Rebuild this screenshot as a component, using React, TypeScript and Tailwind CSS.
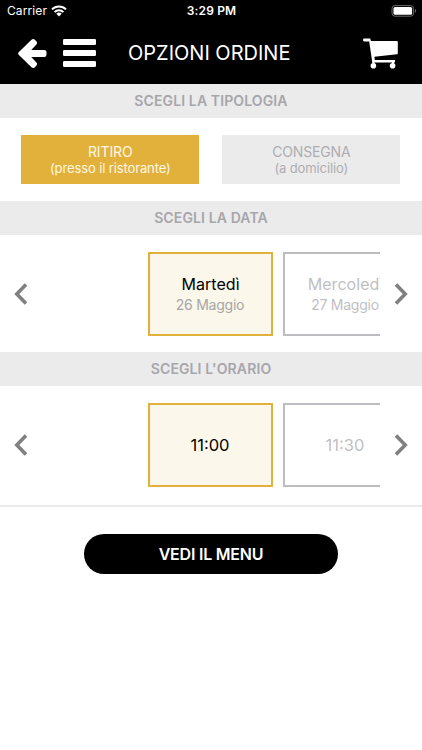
import React, { useState } from "react";

interface Slot {
  title: string;
  subtitle?: string;
}

const dates: Slot[] = [
  { title: "Martedì", subtitle: "26 Maggio" },
  { title: "Mercoledì", subtitle: "27 Maggio" },
];

const times: Slot[] = [{ title: "11:00" }, { title: "11:30" }];

function StatusBar() {
  return (
    <div className="flex h-[22px] items-center text-white">
      <div className="flex flex-1 items-center gap-[4px] pl-[7px]">
        <span className="text-[12px] leading-[22px] tracking-[0.1px]">Carrier</span>
        <svg width="16" height="12" viewBox="0 0 16 12" fill="none" stroke="currentColor" strokeWidth="2">
          <path d="M1 4.4C4.8.5 11.2.5 15 4.4M3.6 7.1c2.4-2.5 6.4-2.5 8.8 0" />
          <path d="M5.3 8.7c1.5-1.5 3.9-1.5 5.4 0L8 11.6z" fill="currentColor" stroke="none" />
        </svg>
      </div>
      <span className="pr-px text-[12px] leading-[22px] font-semibold tracking-[0.15px]">3:29 PM</span>
      <div className="flex flex-1 justify-end pr-[5px]">
        <svg width="26" height="12" viewBox="0 0 26 12">
          <rect x="1" y=".6" width="21.6" height="10.6" rx="3" fill="none" stroke="#6b6b6b" />
          <rect x="2.5" y="2" width="18.6" height="7.8" rx="1.6" fill="#fff" />
          <path d="M24 4c1.6.5 1.6 3.3 0 3.8z" fill="#6b6b6b" />
        </svg>
      </div>
    </div>
  );
}

function NavBar() {
  return (
    <div className="flex h-[62px] items-center pr-[23px] pl-[18px] text-white">
      <svg width="29" height="31" viewBox="0 0.5 29 31" fill="currentColor">
        <path d="M.9 14.4L13.5 2.2Q15 .9 16.6 2.1L18.3 3.8Q19.7 5.3 18.4 7L13.3 12.5H26.2Q28.5 12.5 28.5 14.6V17.2Q28.5 19.4 26.2 19.4H13.3L18.4 25Q19.7 26.7 18.3 28.2L16.6 29.9Q15 31.1 13.5 29.7L.9 17.6Q-.6 16 .9 14.4z" />
      </svg>
      <svg className="ml-4" width="33" height="28" viewBox="0 0 33 28" fill="currentColor">
        <rect y="0" width="33" height="6" rx="1.2" />
        <rect y="11" width="33" height="6" rx="1.2" />
        <rect y="22" width="33" height="6" rx="1.2" />
      </svg>
      <h1 className="flex-1 pl-[32px] text-[20px] leading-[28px] font-normal whitespace-nowrap">
        OPZIONI ORDINE
      </h1>
      <svg width="36" height="32" viewBox="0 0 36 32" fill="currentColor">
        <path d="M1.2 1.6H7.2L8 4H34q.8 0 .8.8V16.3q0 .8-.8.9L11.4 19.8l.4 3.2H32v2.6H9.3L6.2 4.4H1.2Q0 4.4 0 3T1.2 1.6z" />
        <path d="M9.4 23h2v6h-2zM29 25h2v4h-2z" />
        <circle cx="10.4" cy="28.8" r="2.8" />
        <circle cx="29.6" cy="28.8" r="2.8" />
      </svg>
    </div>
  );
}

function SectionTitle({ children }: { children: React.ReactNode }) {
  return (
    <h2 className="h-[34px] bg-[#ebebeb] text-center text-[14px] leading-[34px] font-semibold tracking-[0.12px] text-[#a6a6ab]">
      {children}
    </h2>
  );
}

function Chevron({ className = "" }: { className?: string }) {
  return (
    <svg className={className} width="14" height="22" viewBox="0 0 14 22" fill="none" stroke="#808080" strokeWidth="3.6">
      <path d="M12 1.6L2.8 11l9.2 9.4" />
    </svg>
  );
}

function Carousel({ slots }: { slots: Slot[] }) {
  const [selected, setSelected] = useState(0);

  return (
    <div className="flex items-center justify-between px-[14px]">
      <button onClick={() => setSelected(Math.max(0, selected - 1))}>
        <Chevron />
      </button>
      <div className="flex w-[337px] gap-[10px] overflow-hidden pl-[105px]">
        {slots.map((slot, i) => (
          <button
            key={slot.title}
            onClick={() => setSelected(i)}
            className={`flex h-[84px] w-[125px] shrink-0 flex-col items-center justify-center border-2 ${
              i === selected
                ? "border-[#e2b13c] bg-[#fbf7ea] text-black"
                : "border-[#bcbdc1] bg-white text-[#bfbfc3]"
            }`}
          >
            {slot.subtitle ? (
              <>
                <span className="pl-px text-[16px] leading-[20px] tracking-[0.05px]">{slot.title}</span>
                <span
                  className={`pt-px text-[14px] leading-[20px] tracking-[-0.25px] ${
                    i === selected ? "text-[#a6a6a6]" : ""
                  }`}
                >
                  {slot.subtitle}
                </span>
              </>
            ) : (
              <span className="text-[16.5px] leading-[20px]">{slot.title}</span>
            )}
          </button>
        ))}
      </div>
      <button onClick={() => setSelected(Math.min(slots.length - 1, selected + 1))}>
        <Chevron className="rotate-180" />
      </button>
    </div>
  );
}

export default function App() {
  return (
    <div className="min-h-[750px] w-[422px] bg-white font-['Inter','Liberation_Sans',sans-serif]">
      <header className="h-[84px] bg-black">
        <StatusBar />
        <NavBar />
      </header>

      {/* Order type */}
      <SectionTitle>SCEGLI LA TIPOLOGIA</SectionTitle>
      <div className="flex h-[83px] gap-[23px] px-[21.3px] pt-[17px]">
        <button className="flex h-[49px] w-[178px] flex-col items-center justify-center bg-[#e2b13c] text-[#fff8e4]">
          <span className="text-[14px] leading-[17px] tracking-[-0.1px]">RITIRO</span>
          <span className="text-[13px] leading-[16px] tracking-[-0.12px]">(presso il ristorante)</span>
        </button>
        <button className="flex h-[49px] w-[178px] flex-col items-center justify-center bg-[#ebebeb] text-[#adadb2]">
          <span className="text-[14px] leading-[17px] tracking-[-0.15px]">CONSEGNA</span>
          <span className="text-[13px] leading-[16px] tracking-[-0.12px]">(a domicilio)</span>
        </button>
      </div>

      {/* Date */}
      <SectionTitle>SCEGLI LA DATA</SectionTitle>
      <div className="h-[117px] pt-[17px]">
        <Carousel slots={dates} />
      </div>

      {/* Time */}
      <SectionTitle>SCEGLI L'ORARIO</SectionTitle>
      <div className="h-[121px] border-b-2 border-[#ebebeb] pt-[17px]">
        <Carousel slots={times} />
      </div>

      <button className="mx-auto mt-[27px] block h-[40px] w-[254px] rounded-full bg-black text-[16px] leading-[40px] font-semibold tracking-[-0.22px] text-white">
        VEDI IL MENU
      </button>
    </div>
  );
}
